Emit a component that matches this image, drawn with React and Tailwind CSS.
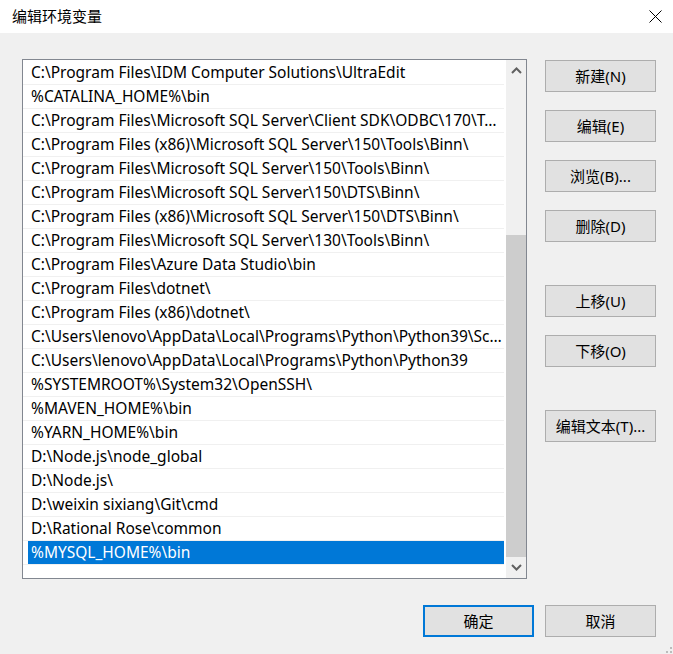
const PATHS = [
  'C:\\Program Files\\IDM Computer Solutions\\UltraEdit',
  '%CATALINA_HOME%\\bin',
  'C:\\Program Files\\Microsoft SQL Server\\Client SDK\\ODBC\\170\\Tools\\Binn\\',
  'C:\\Program Files (x86)\\Microsoft SQL Server\\150\\Tools\\Binn\\',
  'C:\\Program Files\\Microsoft SQL Server\\150\\Tools\\Binn\\',
  'C:\\Program Files\\Microsoft SQL Server\\150\\DTS\\Binn\\',
  'C:\\Program Files (x86)\\Microsoft SQL Server\\150\\DTS\\Binn\\',
  'C:\\Program Files\\Microsoft SQL Server\\130\\Tools\\Binn\\',
  'C:\\Program Files\\Azure Data Studio\\bin',
  'C:\\Program Files\\dotnet\\',
  'C:\\Program Files (x86)\\dotnet\\',
  'C:\\Users\\lenovo\\AppData\\Local\\Programs\\Python\\Python39\\Scripts\\',
  'C:\\Users\\lenovo\\AppData\\Local\\Programs\\Python\\Python39',
  '%SYSTEMROOT%\\System32\\OpenSSH\\',
  '%MAVEN_HOME%\\bin',
  '%YARN_HOME%\\bin',
  'D:\\Node.js\\node_global',
  'D:\\Node.js\\',
  'D:\\weixin sixiang\\Git\\cmd',
  'D:\\Rational Rose\\common',
  '%MYSQL_HOME%\\bin',
];

const SELECTED = 20;

function Btn({ children, primary, className = '' }) {
  return (
    <div
      className={`w-[111px] h-[32px] flex items-center justify-center bg-[#e1e1e1] text-black text-[15px] ${
        primary ? 'border-2 border-[#0078d7]' : 'border border-[#adadad]'
      } ${className}`}
    >
      {children}
    </div>
  );
}

function Chevron({ up }) {
  return (
    <svg width="11" height="7" viewBox="0 0 11 7">
      <polyline
        points={up ? '1,6 5.5,1.5 10,6' : '1,1 5.5,5.5 10,1'}
        fill="none"
        stroke="#606060"
        strokeWidth="2"
      />
    </svg>
  );
}

export default function App() {
  return (
    <div
      className="w-[673px] h-[654px] flex flex-col bg-white overflow-hidden"
      style={{ fontFamily: '"Noto Sans", "Noto Sans CJK SC", sans-serif' }}
    >
      {/* Title bar */}
      <div className="h-[33px] flex items-center justify-between pl-[12px] pr-[11px] bg-white">
        <span className="text-[15px] text-black leading-none">编辑环境变量</span>
        <svg width="13" height="13" viewBox="0 0 13 13">
          <path d="M0.5 0.5 L12.5 12.5 M12.5 0.5 L0.5 12.5" stroke="#000" strokeWidth="1" />
        </svg>
      </div>

      {/* Body */}
      <div className="flex-1 bg-[#f0f0f0] relative">
        <div className="flex pt-[26px] pl-[22px]">
          {/* List box */}
          <div className="w-[505px] h-[520px] border border-[#828790] bg-white flex">
            <div className="flex-1 min-w-0 pt-[1px] pr-[2px]">
              {PATHS.map((p, i) => (
                <div key={i} className="h-[24px] pl-[1px] flex border-b border-[#f0f0f0]">
                  <div
                    className={`flex-1 min-w-0 pl-[3px] ml-[4px] pt-[1px] flex items-center text-[15.5px] ${
                      i === SELECTED ? 'bg-[#0078d7] text-white' : 'text-black'
                    }`}
                  >
                    <span className="truncate pr-[2px]">{p}</span>
                  </div>
                </div>
              ))}
            </div>
            {/* Scrollbar */}
            <div className="w-[20px] shrink-0 bg-[#f0f0f0] flex flex-col">
              <div className="h-[20px] flex items-center justify-center">
                <Chevron up />
              </div>
              <div className="flex-1 flex flex-col">
                <div className="h-[155px]" />
                <div className="flex-1 bg-[#cdcdcd]" />
              </div>
              <div className="h-[21px] flex items-center justify-center">
                <Chevron />
              </div>
            </div>
          </div>

          {/* Right buttons */}
          <div className="ml-[18px] pt-[1px] flex flex-col">
            <Btn>新建(N)</Btn>
            <Btn className="mt-[18px]">编辑(E)</Btn>
            <Btn className="mt-[18px]">浏览(B)...</Btn>
            <Btn className="mt-[18px]">删除(D)</Btn>
            <Btn className="mt-[43px]">上移(U)</Btn>
            <Btn className="mt-[18px]">下移(O)</Btn>
            <Btn className="mt-[43px]">编辑文本(T)...</Btn>
          </div>
        </div>

        {/* Bottom buttons */}
        <div className="flex justify-end gap-[11px] pr-[17px] mt-[26px]">
          <Btn primary>确定</Btn>
          <Btn>取消</Btn>
        </div>

        {/* Resize grip */}
        <svg className="absolute right-0 bottom-0" width="9" height="9" viewBox="0 0 9 9">
          <rect x="6" y="2" width="2" height="2" fill="#bcbcbc" />
          <rect x="2" y="6" width="2" height="2" fill="#bcbcbc" />
          <rect x="6" y="6" width="2" height="2" fill="#bcbcbc" />
        </svg>
      </div>
    </div>
  );
}
